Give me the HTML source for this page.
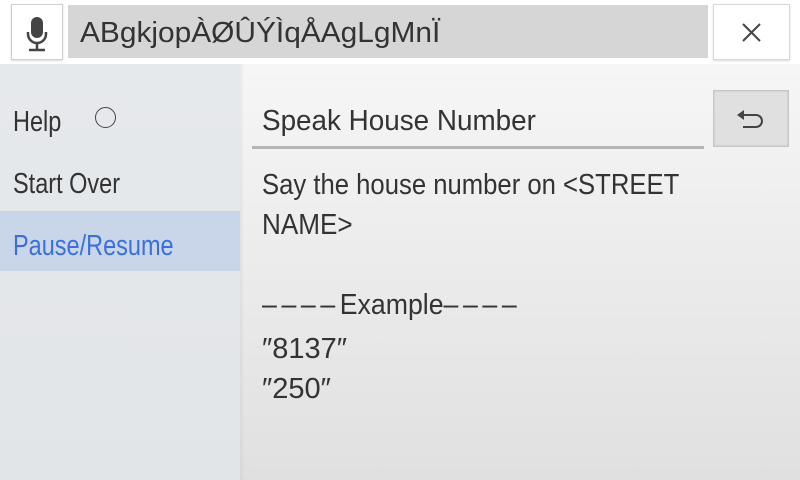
<!DOCTYPE html><html><head><style>
body{margin:0;width:800px;height:480px;overflow:hidden;background:#fff;font-family:"Liberation Sans",sans-serif;color:#333;position:relative}
.a{position:absolute}
.t{position:absolute;font-size:29px;white-space:nowrap;line-height:32px;transform-origin:left center}
.s{transform:scaleX(.81)}
</style></head><body>
<div class="a" style="left:0;top:0;width:800px;height:64px;background:#fff"></div>
<div class="a" style="left:11px;top:4px;width:50px;height:54px;background:#fff;border:1px solid #d0d0d0;box-shadow:0 1px 2px rgba(0,0,0,.15)">
<svg width="50" height="54" viewBox="0 0 50 54"><rect x="19" y="12" width="12" height="21" rx="6" fill="#444"/><path d="M16 27v2a9 9 0 0 0 18 0v-2" fill="none" stroke="#444" stroke-width="2.5"/><path d="M25 38v6M17 45h16" stroke="#444" stroke-width="2.5"/></svg></div>
<div class="a" style="left:68px;top:5px;width:640px;height:53px;background:#d6d6d6"></div>
<div class="t" style="left:80px;top:17px;font-size:29px;transform:scaleX(1.03)">ABgkjopÀØÛÝÌqÅAgLgMnÏ</div>
<div class="a" style="left:713px;top:4px;width:75px;height:54px;background:#fff;border:1px solid #d8d8d8;box-shadow:0 1px 2px rgba(0,0,0,.15)">
<svg width="75" height="54"><path d="M29 19l17 17M46 19L29 36" stroke="#444" stroke-width="2"/></svg></div>
<div class="a" style="left:0;top:64px;width:240px;height:416px;background:linear-gradient(#e6e9ec,#e2e5e8)"></div>
<div class="a" style="left:240px;top:64px;width:560px;height:416px;background:linear-gradient(#f6f6f6,#e0e0e0);box-shadow:inset 3px 0 4px -2px rgba(0,0,0,.08)"></div>
<div class="a" style="left:0;top:211px;width:240px;height:60px;background:#c9d5e9"></div>
<div class="t s" style="left:13px;top:106px">Help</div>
<div class="a" style="left:95px;top:107px;width:21px;height:21px;border:1.5px solid #444;border-radius:50%;box-sizing:border-box"></div>
<div class="t s" style="left:13px;top:168px">Start Over</div>
<div class="t s" style="left:13px;top:230px;color:#3a6fdc">Pause/Resume</div>
<div class="t" style="left:262px;top:105px;transform:scaleX(.96)">Speak House Number</div>
<div class="a" style="left:252px;top:146px;width:452px;height:3px;background:#b5b5b5"></div>
<div class="a" style="left:713px;top:90px;width:74px;height:55px;background:#e0e0e0;border:1px solid #c6c6c6;box-shadow:inset 0 0 2px rgba(0,0,0,.15)">
<svg width="74" height="55"><path d="M30 19l-7 5 7 5z" fill="#444"/><path d="M28 24h14a6 6 0 0 1 0 12H29" fill="none" stroke="#444" stroke-width="2"/></svg></div>
<div class="t" style="left:262px;top:169px;transform:scaleX(.885)">Say the house number on &lt;STREET</div>
<div class="t" style="left:262px;top:209px;transform:scaleX(.9)">NAME&gt;</div>
<div class="t" style="left:262px;top:289px;transform:scaleX(.92)"><span style="letter-spacing:5px">––––</span>Example<span style="letter-spacing:5px">––––</span></div>
<div class="t" style="left:262px;top:333px">″8137″</div>
<div class="t" style="left:262px;top:373px">″250″</div>
</body></html>
